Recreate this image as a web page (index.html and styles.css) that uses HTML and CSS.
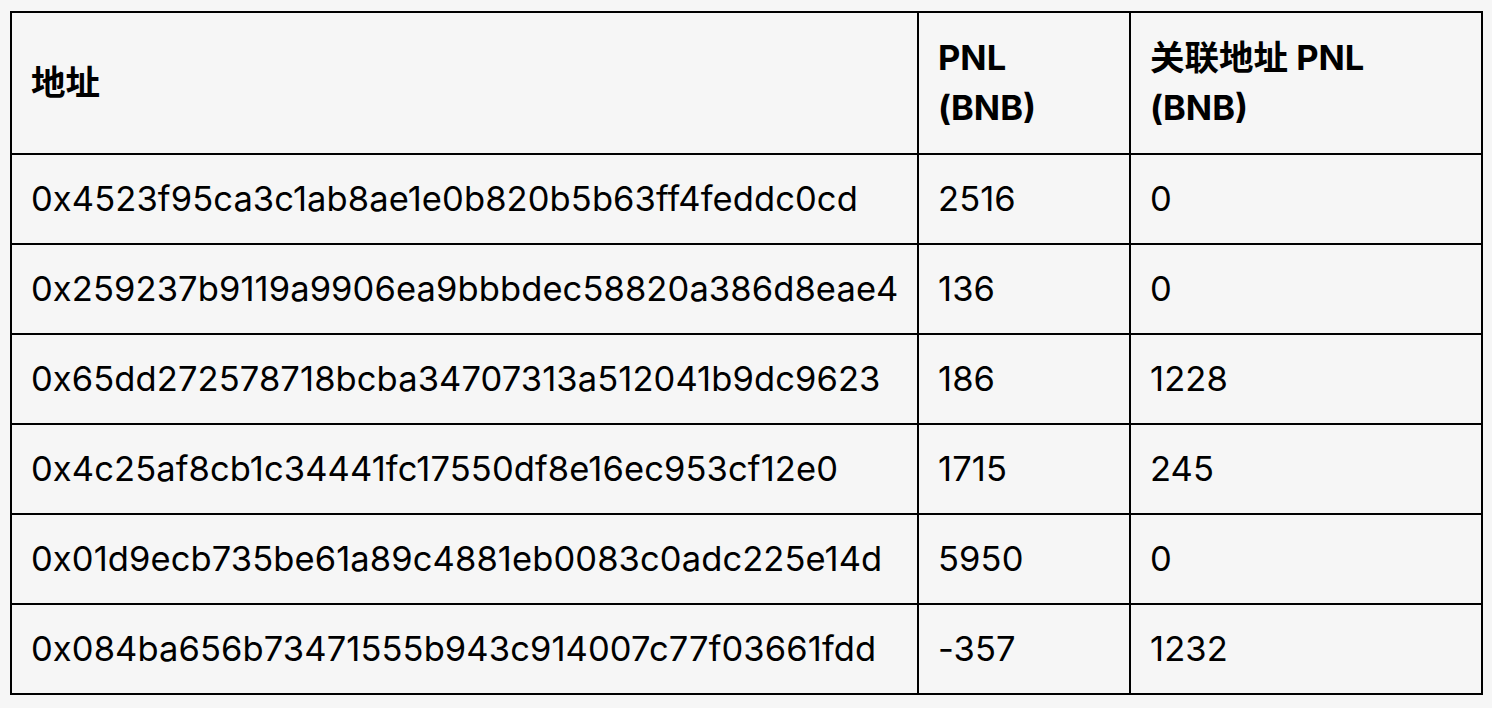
FILE: index.html
```html
<!DOCTYPE html>
<html lang="zh">
<head>
<meta charset="utf-8">
<link rel="stylesheet" href="styles.css">
</head>
<body>
<table class="pnl-table">
  <colgroup>
    <col class="c-addr">
    <col class="c-pnl">
    <col class="c-rel">
  </colgroup>
  <thead>
    <tr><th>地址</th><th>PNL (BNB)</th><th>关联地址 PNL (BNB)</th></tr>
  </thead>
  <tbody>
    <tr><td>0x4523f95ca3c1ab8ae1e0b820b5b63ff4feddc0cd</td><td>2516</td><td>0</td></tr>
    <tr><td>0x259237b9119a9906ea9bbbdec58820a386d8eae4</td><td>136</td><td>0</td></tr>
    <tr><td>0x65dd272578718bcba34707313a512041b9dc9623</td><td>186</td><td>1228</td></tr>
    <tr><td>0x4c25af8cb1c34441fc17550df8e16ec953cf12e0</td><td>1715</td><td>245</td></tr>
    <tr><td>0x01d9ecb735be61a89c4881eb0083c0adc225e14d</td><td>5950</td><td>0</td></tr>
    <tr><td>0x084ba656b73471555b943c914007c77f03661fdd</td><td>-357</td><td>1232</td></tr>
  </tbody>
</table>
</body>
</html>
```
FILE: styles.css
```css
html, body {
  background: #f6f6f6;
}
body {
  margin: 0;
  padding: 11px 10px;
  font-family: Inter, "Noto Sans CJK SC", sans-serif;
  color: #000;
}
.pnl-table {
  border-collapse: collapse;
  table-layout: fixed;
  width: 1471px;
  font-size: 34.5px;
  line-height: 50px;
}
.c-addr { width: 907px; }
.c-pnl { width: 212px; }
.c-rel { width: 352px; }
.pnl-table th,
.pnl-table td {
  border: 2px solid #000;
  text-align: left;
  vertical-align: middle;
  padding: 19px 20px 19px 19px;
}
.pnl-table th {
  font-weight: 700;
  padding-top: 20px;
  padding-bottom: 20px;
}
.pnl-table td {
  font-weight: 400;
  white-space: nowrap;
  letter-spacing: 0.1px;
}
```
